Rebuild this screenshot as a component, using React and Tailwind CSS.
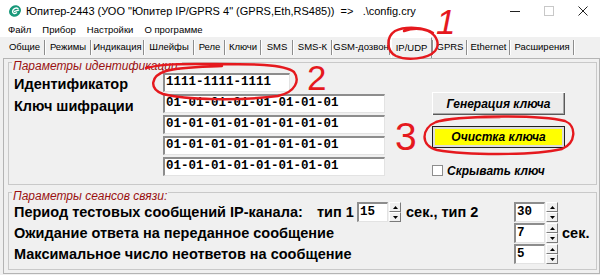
import React from "react";

const tabs = [
  { t: "Общие", w: "w-[39px]" },
  { t: "Режимы", w: "w-[44px]" },
  { t: "Индикация", w: "w-[51px]" },
  { t: "Шлейфы", w: "w-[48px]" },
  { t: "Реле", w: "w-[29px]" },
  { t: "Ключи", w: "w-[34px]" },
  { t: "SMS", w: "w-[30px]" },
  { t: "SMS-К", w: "w-[37px]" },
  { t: "GSM-дозвон", w: "w-[56px]" },
  { t: "IP/UDP", w: "w-[41px]", active: true },
  { t: "GPRS", w: "w-[32px]" },
  { t: "Ethernet", w: "w-[41px]" },
  { t: "Расширения", w: "w-[62px]" },
];

const TITLE = 'Юпитер-2443 (УОО "Юпитер IP/GPRS 4" (GPRS,Eth,RS485))  =>   .\\config.cry';

function Sunken({ className = "", children }) {
  return (
    <div
      className={
        "bg-white border-t-2 border-l-2 border-r border-b border-t-[#8d8d8d] border-l-[#8d8d8d] border-r-[#e3e3e3] border-b-[#e3e3e3] font-['Liberation_Mono',monospace] font-bold text-[12.5px] leading-[15px] pl-[1px] whitespace-pre " +
        className
      }
    >
      {children}
    </div>
  );
}

function SpinBtn({ up }) {
  return (
    <div className="h-[10px] w-[12px] bg-[#f0f0f0] border border-t-white border-l-white border-r-[#7a7a7a] border-b-[#7a7a7a] flex items-center justify-center">
      <svg width="5" height="3" viewBox="0 0 5 3">
        <path d={up ? "M2.5 0 L5 3 L0 3Z" : "M0 0 L5 0 L2.5 3Z"} fill="#000" />
      </svg>
    </div>
  );
}

function Spin({ v }) {
  return (
    <div className="flex h-[20px]">
      <Sunken className="w-[31px] h-[20px] leading-[16px]">{v}</Sunken>
      <div className="ml-[1px] flex flex-col">
        <SpinBtn up />
        <SpinBtn />
      </div>
    </div>
  );
}

function Logo() {
  return (
    <svg width="14" height="14" viewBox="0 0 14 14" className="ml-[8px] shrink-0">
      <ellipse cx="7" cy="7" rx="6.2" ry="5.4" transform="rotate(-35 7 7)" fill="#17987a" />
      <path d="M10 4.6 C8.3 3.4 5 4.4 4.6 7.2 C4.3 9.4 6.6 10.2 8.6 8.8 M6.6 7.3 L10.6 6.2" stroke="#fff" strokeWidth="1.4" fill="none" strokeLinecap="round" />
    </svg>
  );
}

export default function App() {
  const label = "text-[14.5px] font-bold leading-[18px] whitespace-nowrap";
  return (
    <div className="w-[600px] h-[275px] overflow-hidden bg-[#f0f0f0] relative font-['Liberation_Sans',Arial,sans-serif] text-black">
      {/* Title bar */}
      <div className="h-[22px] bg-white flex items-center">
        <Logo />
        <span className="ml-[4px] text-[11px] whitespace-pre">{TITLE}</span>
        <div className="ml-auto flex h-full">
          <div className="w-[34px] h-full flex items-center justify-center">
            <svg width="10" height="10" viewBox="0 0 10 10"><path d="M0 5.5 H10" stroke="#222" strokeWidth="1" /></svg>
          </div>
          <div className="w-[34px] h-full flex items-center justify-center">
            <svg width="10" height="10" viewBox="0 0 10 10"><rect x="0.5" y="0.5" width="9" height="9" stroke="#c8c8c8" fill="none" /></svg>
          </div>
          <div className="w-[34px] h-full flex items-center justify-center">
            <svg width="10" height="10" viewBox="0 0 10 10"><path d="M0.5 0.5 L9.5 9.5 M9.5 0.5 L0.5 9.5" stroke="#222" strokeWidth="1" /></svg>
          </div>
        </div>
      </div>

      {/* Menu bar */}
      <div className="h-[15px] bg-white flex items-center pl-[8px] gap-[11px] text-[9.5px] leading-[12px]">
        <span>Файл</span>
        <span>Прибор</span>
        <span>Настройки</span>
        <span>О программе</span>
      </div>

      {/* Tabs */}
      <div className="h-[21px] flex items-center pl-[5px] text-[9.5px]">
        {tabs.map((tb) => (
          <React.Fragment key={tb.t}>
            <div
              className={
                tb.w +
                " h-full flex items-center justify-center whitespace-nowrap " +
                (tb.active ? "border-l border-t border-r border-l-white border-t-white border-r-[#8d8d8d]" : "")
              }
            >
              {tb.t}
            </div>
            <div className="w-[2px] h-[15px] border-l border-r border-l-[#8d8d8d] border-r-white" />
          </React.Fragment>
        ))}
      </div>

      {/* Tab page */}
      <div className="ml-[3px] h-[216px] border border-[#b4b4b4] pb-[2px]">
        {/* Group 1 */}
        <div className="mt-[3px] ml-[4px] mr-[2px] border border-[#c9c9c9] pl-[5px] pb-[8px]">
          <div className="-mt-[3px] -ml-[2px] w-fit px-[1px] bg-[#f0f0f0] text-[12px] leading-[12px] italic text-[#9a1010]">
            Параметры идентификации:
          </div>
          <div className="mt-[1px] flex">
            <div className="flex flex-col gap-[2px]">
              <div className="flex h-[19px]">
                <div className={"w-[149px] pt-[2px] " + label}>Идентификатор</div>
                <Sunken className="w-[127px] h-[19px]">1111-1111-1111</Sunken>
              </div>
              <div className="flex h-[19px]">
                <div className={"w-[149px] pt-[3px] " + label}>Ключ шифрации</div>
                <Sunken className="w-[222px] h-[19px]">01-01-01-01-01-01-01-01</Sunken>
              </div>
              <div className="flex h-[19px] pl-[149px]">
                <Sunken className="w-[222px] h-[19px]">01-01-01-01-01-01-01-01</Sunken>
              </div>
              <div className="flex h-[19px] pl-[149px]">
                <Sunken className="w-[222px] h-[19px]">01-01-01-01-01-01-01-01</Sunken>
              </div>
              <div className="flex h-[19px] pl-[149px]">
                <Sunken className="w-[222px] h-[19px]">01-01-01-01-01-01-01-01</Sunken>
              </div>
            </div>
            <div className="ml-[47px] flex flex-col">
              <div className="mt-[19px] w-[133px] h-[23px] bg-[#ececec] flex items-center justify-center text-[12px] font-bold italic shadow-[inset_1px_1px_0_#fff,inset_-1px_-1px_0_#5a5a5a,inset_-2px_-2px_0_#a8a8a8]">
                Генерация ключа
              </div>
              <div className="mt-[11px] w-[133px] h-[22px] border border-[#202020] p-[2px] bg-[#dcdcdc]">
                <div className="h-full bg-[#ffff00] flex items-center justify-center text-[12px] font-bold italic">
                  Очистка ключа
                </div>
              </div>
              <div className="mt-[17px] h-[11px] flex items-center">
                <div className="w-[11px] h-[11px] bg-white border border-[#8d8d8d]" />
                <span className="ml-[4px] text-[12px] font-bold italic leading-[12px]">Скрывать ключ</span>
              </div>
            </div>
          </div>
        </div>

        {/* Group 2 */}
        <div className="mt-[7px] ml-[4px] mr-[2px] border border-[#c9c9c9] pl-[5px] pb-[5px]">
          <div className="-mt-[3px] -ml-[2px] w-fit px-[1px] bg-[#f0f0f0] text-[12px] leading-[12px] italic text-[#9a1010]">
            Параметры сеансов связи:
          </div>
          <div className="flex flex-col gap-[1px]">
            <div className="flex items-center h-[20px]">
              <div className={"w-[303px] " + label}>Период тестовых сообщений IP-канала:</div>
              <div className={"w-[40px] " + label}>тип 1</div>
              <Spin v="15" />
              <div className={"w-[113px] pl-[5px] " + label}>сек., тип 2</div>
              <Spin v="30" />
            </div>
            <div className="flex items-center h-[20px]">
              <div className={"w-[500px] " + label}>Ожидание ответа на переданное сообщение</div>
              <Spin v="7" />
              <div className={"ml-[4px] " + label}>сек.</div>
            </div>
            <div className="flex items-center h-[20px]">
              <div className={"w-[500px] " + label}>Максимальное число неответов на сообщение</div>
              <Spin v="5" />
            </div>
          </div>
        </div>
      </div>

      {/* Red hand-drawn annotations */}
      <svg className="absolute left-0 top-0 pointer-events-none" width="600" height="275" viewBox="0 0 600 275">
        <g stroke="#e5191e" strokeWidth="2.4" fill="none" strokeLinecap="round" strokeLinejoin="round">
          <path d="M433 33 C425 27 405 26 395 31 C386 37 386 51 396 56 C407 61 428 59 435 51 C440 45 438 36 428 31 C420 28 410 29 404 31" />
          <path d="M146 68 C165 63 190 64 215 64 C250 64 285 64 294 72 C300 80 296 92 278 96 C240 101 185 100 163 94 C149 89 150 76 166 71 C180 67 200 67 222 66" />
          <path d="M440 121 C470 115 540 115 565 121 C577 126 576 143 562 149 C530 156 465 155 437 150 C420 146 421 128 436 122 C450 117 480 117 500 117" />
        </g>
      </svg>
      <span className="absolute left-[436px] top-[4px] text-[35px] leading-none italic text-[#e5191e] pointer-events-none">1</span>
      <span className="absolute left-[307px] top-[60px] text-[35px] leading-none text-[#e5191e] pointer-events-none">2</span>
      <span className="absolute left-[395px] top-[117px] text-[39px] leading-none text-[#e5191e] pointer-events-none">3</span>
    </div>
  );
}
